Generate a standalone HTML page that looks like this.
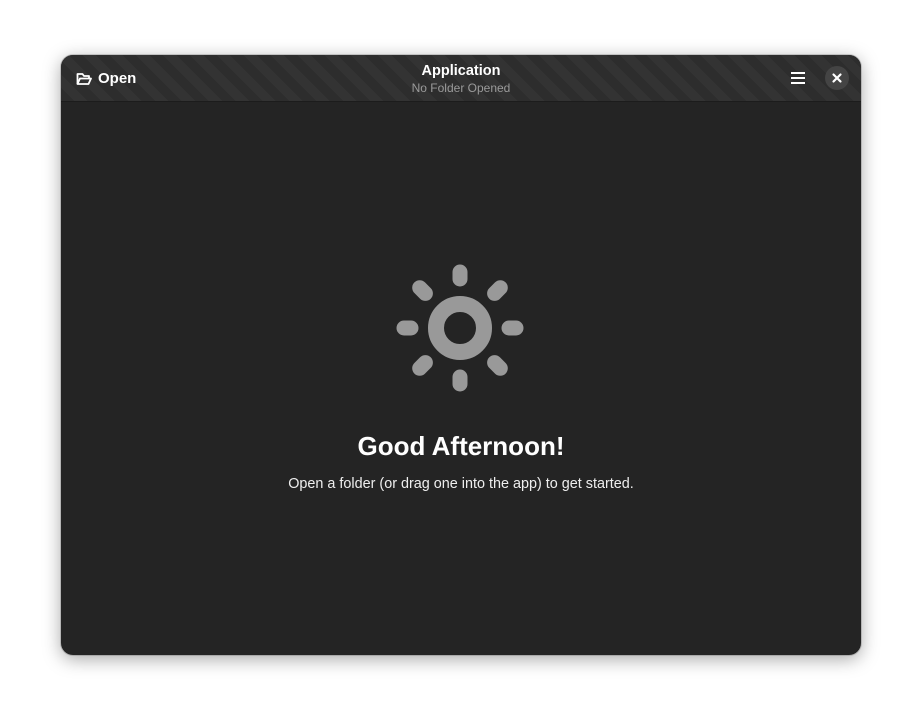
<!DOCTYPE html>
<html><head><style>
html,body{margin:0;width:922px;height:722px;background:#fff;overflow:hidden;font-family:"Liberation Sans",sans-serif}
.win{position:absolute;left:61px;top:55px;width:800px;height:600px;border-radius:12px;background:#242424;overflow:hidden;box-shadow:0 4px 18px rgba(0,0,0,.35),0 0 0 1px rgba(0,0,0,.15)}
.hb{position:absolute;left:0;top:0;width:800px;height:46px;border-bottom:1px solid #1c1c1c;
background:repeating-linear-gradient(45deg,#2d2d2d 0 9.5px,#333 9.5px 19px)}
.open{position:absolute;left:15px;top:15px;color:#fff;font-weight:bold;font-size:15px;display:flex;align-items:center;gap:6px}
.t1{position:absolute;left:0;width:800px;top:8px;text-align:center;color:#fff;font-weight:bold;font-size:14.5px}
.t2{position:absolute;left:0;width:800px;top:26px;text-align:center;color:#9a9a9a;font-size:12px}
.close{position:absolute;left:764px;top:11px;width:24px;height:24px;border-radius:50%;background:#444}
h1{position:absolute;left:0;width:800px;top:376px;margin:0;text-align:center;color:#fff;font-size:26px;font-weight:bold}
p{position:absolute;left:0;width:800px;top:421px;margin:0;text-align:center;color:#eee;font-size:14.4px}
</style></head><body>
<div class="win">
<div class="hb">
<div class="open"><svg width="16" height="16" viewBox="0 0 16 16" fill="none" stroke="#fff" stroke-width="1.8" stroke-linejoin="round"><path d="M1.5 13V3h5l1.5 2h5v2.5"/><path d="M1.5 13l2.5-5.5h11L12.5 13z"/></svg>Open</div>
<div class="t1">Application</div>
<div class="t2">No Folder Opened</div>
<svg style="position:absolute;left:729px;top:15px" width="16" height="16" viewBox="0 0 16 16"><rect x="1" y="2" width="14" height="2" fill="#fff"/><rect x="1" y="7" width="14" height="2" fill="#fff"/><rect x="1" y="12" width="14" height="2" fill="#fff"/></svg>
<div class="close"><svg width="24" height="24" viewBox="0 0 24 24"><path d="M8.5 8.5l7 7M15.5 8.5l-7 7" stroke="#fff" stroke-width="2.2" stroke-linecap="round"/></svg></div>
</div>
<svg style="position:absolute;left:319px;top:193px" width="160" height="160" viewBox="-80 -80 160 160">
<circle r="24" fill="none" stroke="#999" stroke-width="16"/>
<g stroke="#999" stroke-width="15" stroke-linecap="round">
<path d="M0-49V-56M0 49V56M-49 0H-56M49 0H56M34.6-34.6L40.3-40.3M-34.6-34.6L-40.3-40.3M34.6 34.6L40.3 40.3M-34.6 34.6L-40.3 40.3"/>
</g></svg>
<h1>Good Afternoon!</h1>
<p>Open a folder (or drag one into the app) to get started.</p>
</div>
</body></html>
